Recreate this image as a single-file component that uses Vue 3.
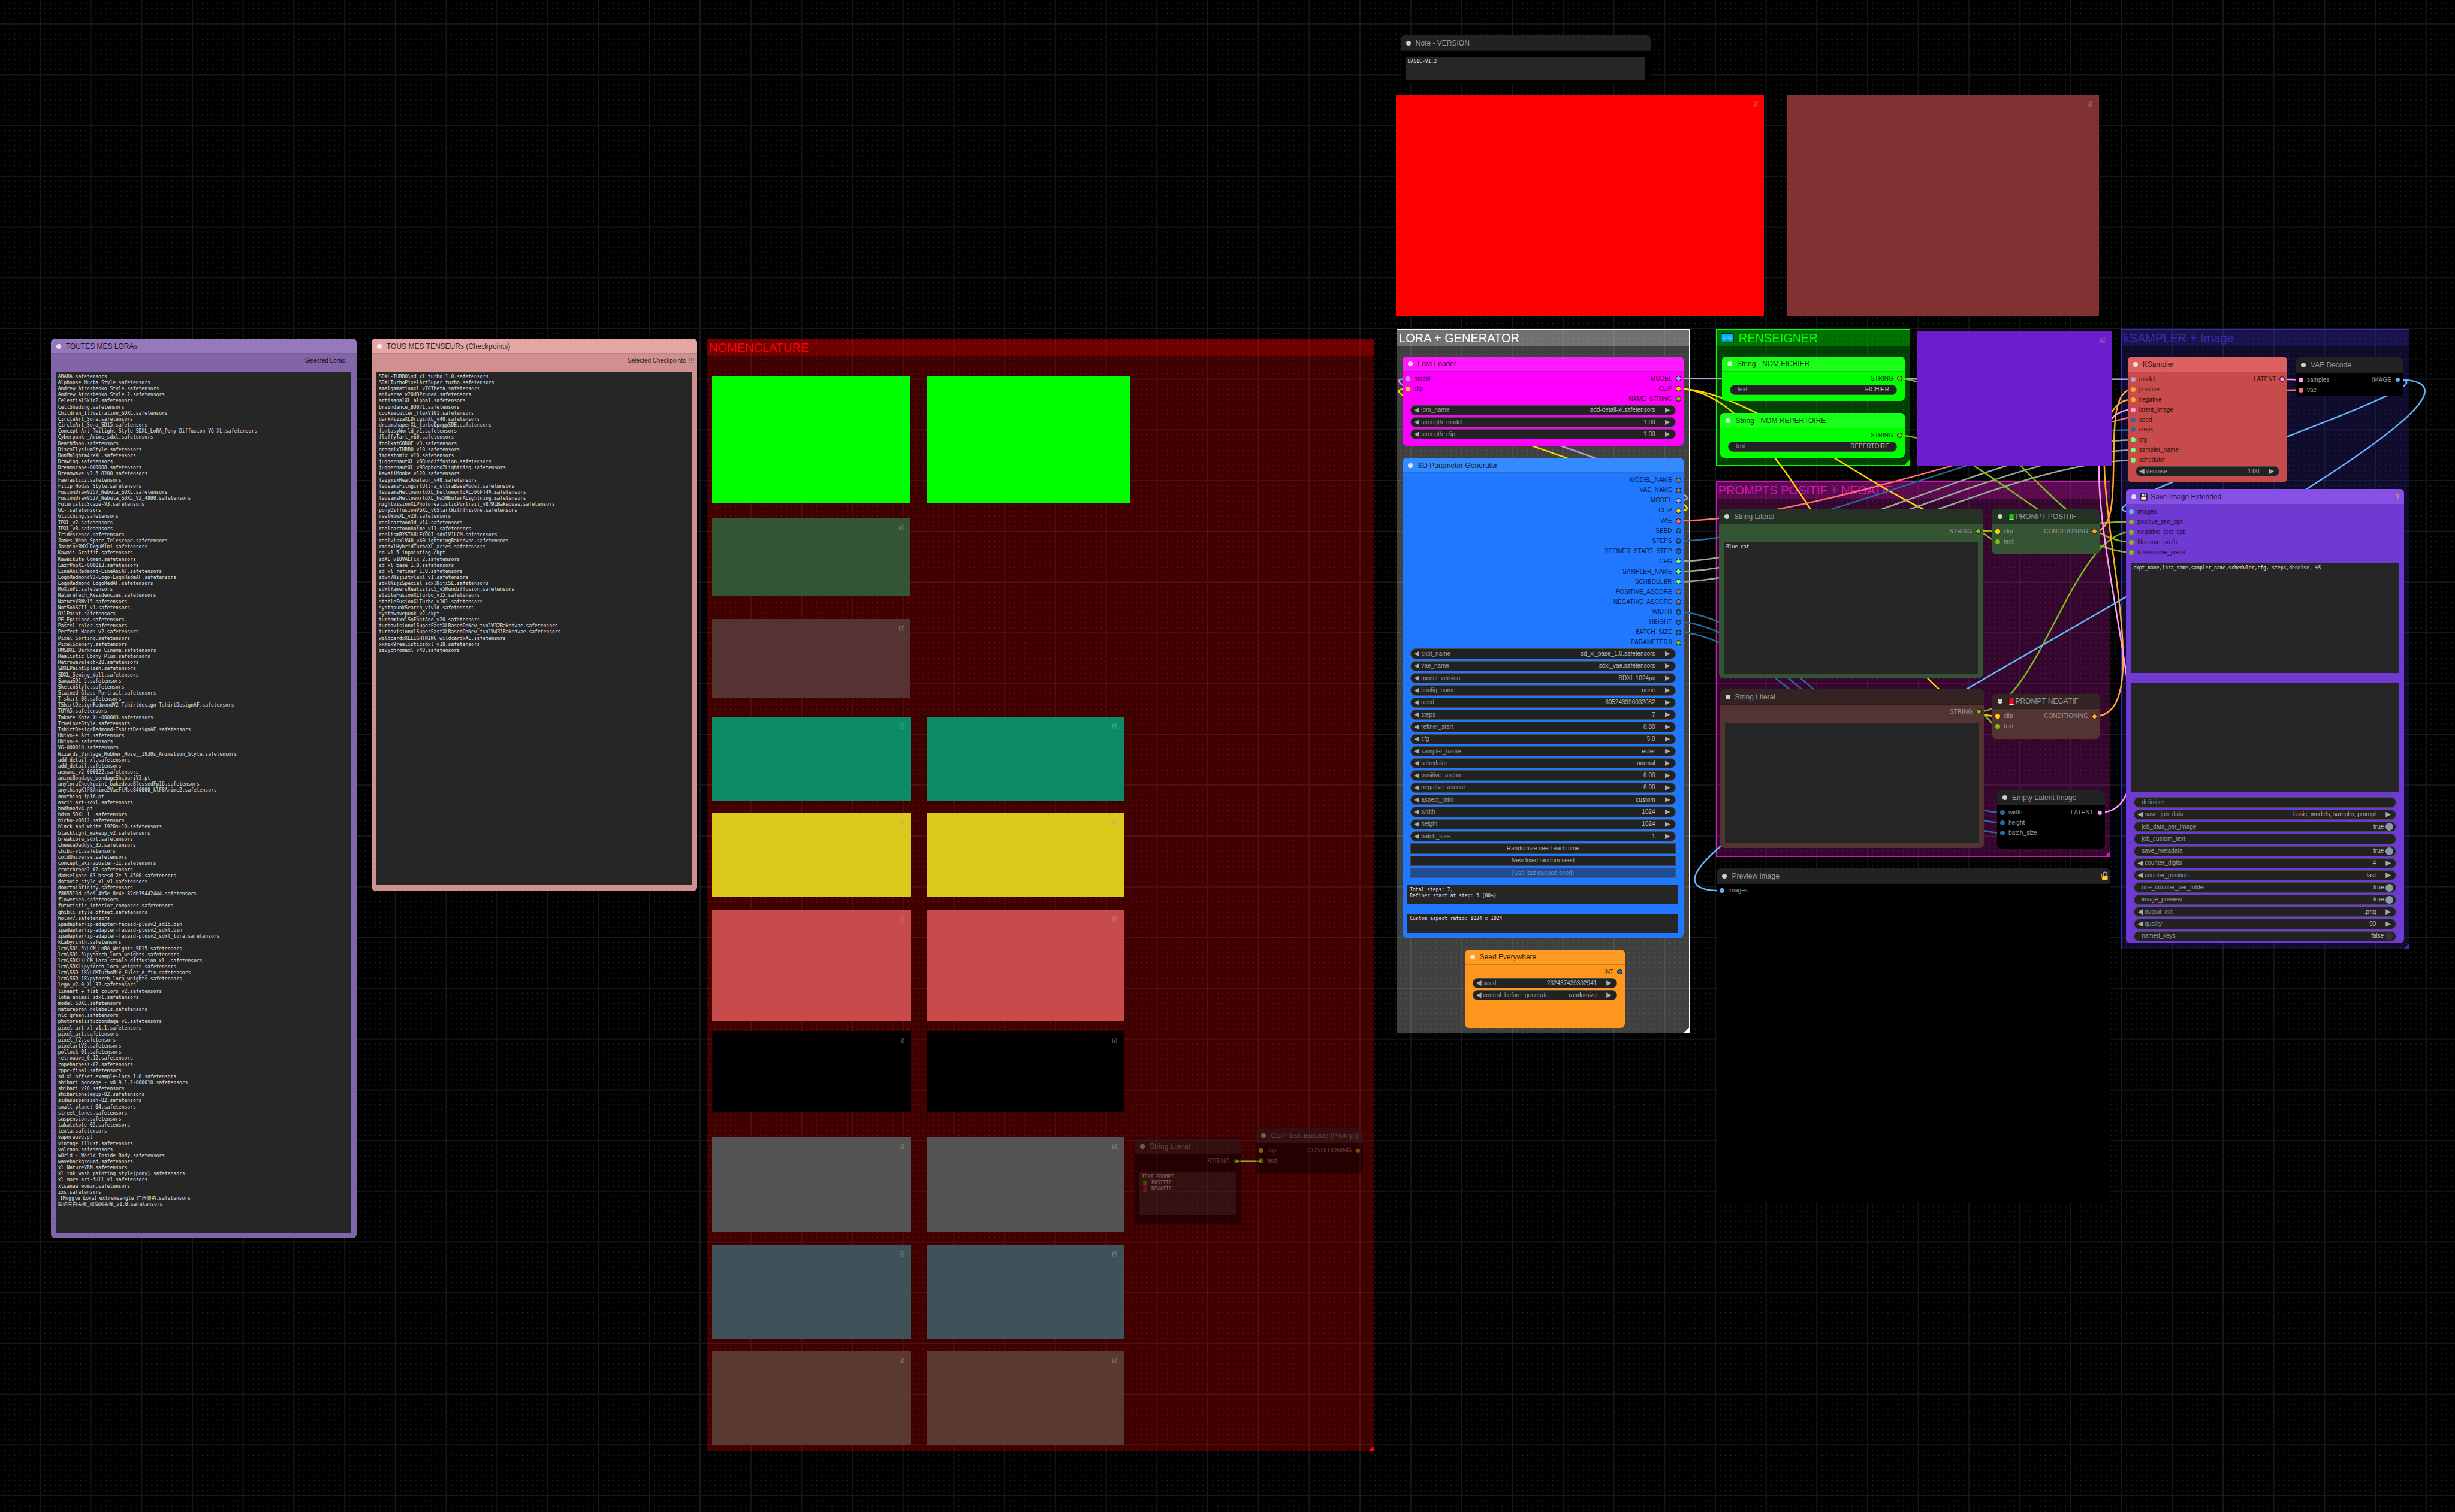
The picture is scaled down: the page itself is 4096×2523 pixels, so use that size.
<script setup>
const W = 4836
const H = 2979

const place = (o) => ({
  left: (o.x / W) * 100 + '%',
  top: (o.y / H) * 100 + '%',
  width: ((o.r - o.x) / W) * 100 + '%',
  height: ((o.b - o.y) / H) * 100 + '%',
})

const files = (text) =>
  text.trim().split('\n').map((s) => (/\.(pt|bin|ckpt)$/.test(s) ? s : s + '.safetensors'))

const loras = files(String.raw`
ABARA
Alphonse Mucha Style
Andrew Atroshenko Style
Andrew Atroshenko Style_2
CelestialSkin2
CellShading
Children_Illustration_SDXL
CircleArt_Sora
CircleArt_Sora_SD15
Concept Art Twilight Style SDXL_LoRA_Pony Diffusion V6 XL
Cyberpunk _Anime_sdxl
DeathMoon
DiscoElysiumStyle
DonMn1ghtm4reXL
Drawing
Dreamscape-000008
Dreamwave v2.5_8200
FaeTastic2
Filip Hodas Style
FusionDraw9257_Nebula_SDXL
FusionDraw9527_Nebula_SDXL_V2_4800
FuturisticScape-V3
GC-
Glitching
IPXL_v2
IPXL_v8
Iridescence
James_Webb_Space_Telescope
JasmineBWXLDoguMini
Kawaii Graffit
Kawaikute Gomen
LazrPopXL-000013
LineAniRedmond-LineAniAF
LogoRedmondV2-Logo-LogoRedmAF
LogoRedmond_LogoRedAF
MoXinV1
NatureTech_Residencies
NatureVRMv15
NotSoASCII_v1
OilPaint
PE_EpicLand
Pastel color
Perfect Hands v2
Pixel Sorting
PixelScenery
RMSDXL_Darkness_Cinema
Realistic_Ebony_Plus
RetrowaveTech-20
SDXLPaintSplash
SDXL_Sewing_doll
SanaaSD1-5
SketchStyle
Stained Glass Portrait
T-shirt-08
TShirtDesignRedmondV2-Tshirtdesign-TshirtDesignAF
TUYA5
Takate_Kote_XL-000003
TrueLoveStyle
TshirtDesignRedmond-TshirtDesignAF
Ukiyo-e Art
Ukiyo-e
VG-000010
Wizards_Vintage_Rubber_Hose__1930s_Animation_Style
add-detail-xl
add_detail
aenami_v2-000022
animeBondage_bondageShibariV3.pt
anyloraCheckpoint_bakedvaeBlessedFp16
anythingKlF8Anime2VaeFtMse840000_klF8Anime2
anything_fp16.pt
ascii_art-sdxl
badhandv4.pt
bdsm_SDXL_1_
bichu-v0612
black_and_white_1920s-10
blacklight_makeup_v2
breakcore_sdxl
cheeseDaddys_35
chibi-v1
coldUniverse
concept_akiraposter-11
crotchrope2-02
damselpose-03-bsesd-2e-5-4500
dataviz_style_xl_v1
doortoinfinity
f865513d-a5e9-4b5e-8e4e-82db39442444
flowersea
futuristic_interior_composer
ghibli_style_offset
holov7
ipadapter\ip-adapter-faceid-plusv2_sd15.bin
ipadapter\ip-adapter-faceid-plusv2_sdxl.bin
ipadapter\ip-adapter-faceid-plusv2_sdxl_lora
kLabyrinth
lcm\SD1.5\LCM_LoRA_Weights_SD15
lcm\SD1.5\pytorch_lora_weights
lcm\SDXL\LCM_lora-stable-diffusion-xl 
lcm\SDXL\pytorch_lora_weights
lcm\SSD-1B\LCMTurboMix_Euler_A_fix
lcm\SSD-1B\pytorch_lora_weights
lego_v2.0_XL_32
lineart + flat colors v2
loha_animal_sdxl
model_SDXL
naturepron_nolabels
nlc_green
photorealisticbondage_v1
pixel-art-xl-v1.1
pixel_art
pixel_f2
pixelartV3
pollock-01
retrowave_0.12
ropeharness-02
rppc-final
sd_xl_offset_example-lora_1.0
shibari_bondage_-_v0.9.1.2-000010
shibari_v20
shibarionelegup-02
sidesuspension-02
small-planet-04
street_tones
suspension
takatekote-02
texta
vaporwave.pt
vintage_illust
volcano
w0rld - World Inside Body
wavebackground
xl_NatureVRM
xl_ink wash painting style(pony)
xl_more_art-full_v1
xlsanaa woman
zxs
【Muggle Lora】extremeangle 广角仰拍
简约黑白头像_极简风头像_v1.0`)

const checkpoints = files(String.raw`
SDXL-TURBO\sd_xl_turbo_1.0
SDXLTurboPixelArtSuper_turbo
amalgamationxl_v70Theta
aniverse_v20HDPruned
artisanalXL_alpha1
braindance_BD071
cookiecutter_flexV101
darkPizzaXLOriginXL_v40
dreamshaperXL_turboDpmppSDE
fantasyWorld_v1
fluffyTart_v60
foolkatGODOF_v3
grogmixTURBO_v10
impastomix_v10
juggernautXL_v8Rundiffusion
juggernautXL_v9Rdphoto2Lightning
kawaiiMonke_v120
lazymixRealAmateur_v40
leosamsFilmgirlUltra_ultraBaseModel
leosamsHelloworldXL_helloworldXL50GPT4V
leosamsHelloworldXL_hw50EulerALightning
nightvisionXLPhotorealisticPortrait_v0791Bakedvae
ponyDiffusionV6XL_v6StartWithThisOne
realWowXL_v20
realcartoon3d_v14
realcartoonAnime_v11
realismBYSTABLEYOGI_sdxlV1LCM
realvisxlV40_v40LightningBakedvae
rmsdxlHybridTurboXL_aries
sd-v1-5-inpainting.ckpt
sdXL_v10VAEFix_2
sd_xl_base_1.0
sd_xl_refiner_1.0
sdvn7Nijistylexl_v1
sdxlNijiSpecial_sdxlNijiSE
sdxlYamersRealistic5_v5Rundiffusion
stableFusionXLTurbo_v15
stableFusionXLTurbo_v161
synthpunkSearch_vivid
synthwavepunk_v2.ckpt
turbomixxlSoFastAnd_v20
turbovisionxlSuperFastXLBasedOnNew_tvxlV32Bakedvae
turbovisionxlSuperFastXLBasedOnNew_tvxlV431Bakedvae
wildcardxXLLIGHTNING_wildcardxXL
xxmix9realisticsdxl_v10
zavychromaxl_v40`)

const groups = [
  { title: 'NOMENCLATURE', cls: 'g-red', x: 1392, y: 667, r: 2707, b: 2860 },
  { title: 'LORA + GENERATOR', cls: 'g-white', x: 2751, y: 648, r: 3328, b: 2036 },
  { title: 'RENSEIGNER', cls: 'g-green', icon: 'keyboard', x: 3380, y: 648, r: 3763, b: 917 },
  { title: 'PROMPTS POSITIF + NEGATIF', cls: 'g-pink', x: 3380, y: 948, r: 4157, b: 1688 },
  { title: 'kSAMPLER + Image', cls: 'g-indigo', x: 4178, y: 648, r: 4746, b: 1870 },
]

const pair = (cls, y, b) => [
  { cls, x: 1403, r: 1795, y, b },
  { cls, x: 1826, r: 2214, y, b },
]
const swatches = [
  { cls: 's-lime', x: 1403, y: 741, r: 1794, b: 992 },
  { cls: 's-lime', x: 1826, y: 741, r: 2225, b: 992 },
  { cls: 's-forest', x: 1403, y: 1021, r: 1794, b: 1175 },
  { cls: 's-brown', x: 1403, y: 1220, r: 1794, b: 1376 },
  ...pair('s-teal', 1412, 1577),
  ...pair('s-yellow', 1601, 1768),
  ...pair('s-coral', 1792, 2012),
  ...pair('s-black', 2032, 2190),
  ...pair('s-gray', 2241, 2427),
  ...pair('s-slate', 2452, 2638),
  ...pair('s-rust', 2662, 2848),
  { cls: 's-red', x: 2750, y: 186, r: 3475, b: 623 },
  { cls: 's-maroon', x: 3519, y: 186, r: 4135, b: 622 },
  { cls: 's-violet', x: 3777, y: 653, r: 4160, b: 917 },
]

const C = {
  model: '#b39ddb', clip: '#ffd500', vae: '#ff6e6e', str: '#7cbb1a', int: '#29699c',
  any: '#777788', on: '#77ff77', link: '#99aa99', cond: '#ffa931', latent: '#ff9cf9', image: '#64b5f6',
}

const combo = (name, value) => ({ k: 'combo', name, value })
const num = (name, value) => ({ k: 'num', name, value })
const text = (name, value) => ({ k: 'text', name, value })
const toggle = (name, on) => ({ k: 'toggle', name, on })
const button = (name, off) => ({ k: 'button', name, off })

const gap = (h) => ({ k: 'gap', h })
const widgets = (list) => ({ k: 'widgets', list, h: list.length * 24 - 4 })
const area = (h, value = '') => ({ k: 'area', h, value })
const slots = (ins, outs) => ({ k: 'slots', ins, outs, h: Math.max(ins.length, outs.length) * 20 })

const nodes = [
  { title: 'TOUTES MES LORAs', cls: 'n-lilac', x: 100, y: 667, r: 702, b: 2440,
    rows: [slots([], [['Selected Loras', 'grid']]), gap(16), { k: 'list', h: 1696, lines: loras }, gap(11)] },
  { title: 'TOUS MES TENSEURs (Checkpoints)', cls: 'n-rose', x: 732, y: 667, r: 1373, b: 1756,
    rows: [slots([], [['Selected Checkpoints', 'grid']]), gap(16), { k: 'list', h: 1011, lines: checkpoints }, gap(12)] },
  { title: 'Note - VERSION', cls: 'n-black', x: 2759, y: 70, r: 3252, b: 168,
    rows: [gap(12), area(46, 'BASIC-V1.2'), gap(10)] },
  { title: 'Lora Loader', cls: 'n-magenta', x: 2763, y: 702, r: 3316, b: 878,
    rows: [
      slots([['model', C.model], ['clip', C.clip]], [['MODEL', C.model], ['CLIP', C.clip], ['NAME_STRING', C.str]]),
      gap(6),
      widgets([combo('lora_name', 'add-detail-xl.safetensors'), num('strength_model', '1.00'), num('strength_clip', '1.00')]),
      gap(12),
    ] },
  { title: 'SD Parameter Generator', cls: 'n-blue', x: 2763, y: 902, r: 3316, b: 1848,
    rows: [
      slots([], [
        ['MODEL_NAME', C.any], ['VAE_NAME', C.any], ['MODEL', C.model], ['CLIP', C.clip], ['VAE', C.vae],
        ['SEED', C.int], ['STEPS', C.int], ['REFINER_START_STEP', C.int], ['CFG', C.on], ['SAMPLER_NAME', C.on],
        ['SCHEDULER', C.on], ['POSITIVE_ASCORE', C.any], ['NEGATIVE_ASCORE', C.any], ['WIDTH', C.int],
        ['HEIGHT', C.int], ['BATCH_SIZE', C.int], ['PARAMETERS', C.str],
      ]),
      gap(6),
      widgets([
        combo('ckpt_name', 'sd_xl_base_1.0.safetensors'), combo('vae_name', 'sdxl_vae.safetensors'),
        combo('model_version', 'SDXL 1024px'), combo('config_name', 'none'), num('seed', '605243996032082'),
        num('steps', '7'), num('refiner_start', '0.80'), num('cfg', '5.0'), combo('sampler_name', 'euler'),
        combo('scheduler', 'normal'), num('positive_ascore', '6.00'), num('negative_ascore', '6.00'),
        combo('aspect_ratio', 'custom'), num('width', '1024'), num('height', '1024'), num('batch_size', '1'),
        button('Randomize seed each time'), button('New fixed random seed'), button('(Use last queued seed)', true),
      ]),
      gap(14), area(37, 'Total steps: 7,\nRefiner start at step: 5 (80%)'), gap(20),
      area(37, 'Custom aspect ratio: 1024 x 1024'), gap(10),
    ] },
  { title: 'Seed Everywhere', cls: 'n-orange', x: 2885, y: 1871, r: 3201, b: 2025,
    rows: [slots([], [['INT', C.int]]), gap(6), widgets([num('seed', '232437439302941'), combo('control_before_generate', 'randomize')]), gap(54)] },
  { title: 'String - NOM FICHIER', cls: 'n-lime', x: 3392, y: 702, r: 3752, b: 790,
    rows: [slots([], [['STRING', C.str]]), gap(6), widgets([text('text', 'FICHIER')]), gap(12)] },
  { title: 'String - NOM REPERTOIRE', cls: 'n-lime', x: 3389, y: 814, r: 3752, b: 902,
    rows: [slots([], [['STRING', C.str]]), gap(6), widgets([text('text', 'REPERTOIRE')]), gap(12)] },
  { title: 'String Literal', cls: 'n-forest', x: 3386, y: 1003, r: 3907, b: 1336,
    rows: [slots([], [['STRING', C.str]]), gap(16), area(258, 'Blue cat'), gap(9)] },
  { title: 'PROMPT POSITIF', icon: 'book-green', cls: 'n-forest', x: 3925, y: 1003, r: 4136, b: 1092,
    rows: [slots([['clip', C.clip], ['text', C.str]], [['CONDITIONING', C.cond]]), gap(19)] },
  { title: 'String Literal', cls: 'n-brown', x: 3388, y: 1358, r: 3908, b: 1671,
    rows: [slots([], [['STRING', C.str]]), gap(16), area(236), gap(11)] },
  { title: 'PROMPT NEGATIF', icon: 'book-red', cls: 'n-brown', x: 3925, y: 1367, r: 4136, b: 1456,
    rows: [slots([['clip', C.clip], ['text', C.str]], [['CONDITIONING', C.cond]]), gap(19)] },
  { title: 'Empty Latent Image', cls: 'n-black', x: 3934, y: 1557, r: 4146, b: 1672,
    rows: [slots([['width', C.int], ['height', C.int], ['batch_size', C.int]], [['LATENT', C.latent]]), gap(25)] },
  { title: 'Preview Image', cls: 'n-black', end: 'lock', x: 3382, y: 1711, r: 4157, b: 2369,
    rows: [slots([['images', C.image]], []), gap(608)] },
  { title: 'KSampler', cls: 'n-coral', x: 4191, y: 703, r: 4506, b: 951,
    rows: [
      slots([
        ['model', C.model], ['positive', C.cond], ['negative', C.cond], ['latent_image', C.latent], ['seed', C.int],
        ['steps', C.int], ['cfg', C.on], ['sampler_name', C.on], ['scheduler', C.on],
      ], [['LATENT', C.latent]]),
      gap(6), widgets([num('denoise', '1.00')]), gap(12),
    ] },
  { title: 'VAE Decode', cls: 'n-black', x: 4522, y: 704, r: 4733, b: 780,
    rows: [slots([['samples', C.latent], ['vae', C.vae]], [['IMAGE', C.image]]), gap(6)] },
  { title: 'Save Image Extended', icon: 'floppy', end: 'help', cls: 'n-violet', x: 4188, y: 964, r: 4736, b: 1859,
    rows: [
      slots([
        ['images', C.image], ['positive_text_opt', C.str], ['negative_text_opt', C.str],
        ['filename_prefix', C.str], ['foldername_prefix', C.str],
      ], []),
      gap(16), area(215, 'ckpt_name,lora_name,sampler_name,scheduler,cfg, steps,denoise, %S'), gap(20), area(215), gap(10),
      widgets([
        text('delimiter', '_'), combo('save_job_data', 'basic, models, sampler, prompt'), toggle('job_data_per_image', true),
        text('job_custom_text', ''), toggle('save_metadata', true), num('counter_digits', '4'), combo('counter_position', 'last'),
        toggle('one_counter_per_folder', true), toggle('image_preview', true), combo('output_ext', '.png'),
        num('quality', '90'), toggle('named_keys', false),
      ]),
      gap(4),
    ] },
  { title: 'String Literal', cls: 'n-black ghost', x: 2235, y: 2244, r: 2445, b: 2411,
    rows: [slots([], [['STRING', C.str]]), gap(16), { k: 'legend', h: 85 }, gap(16)] },
  { title: 'CLIP Text Encode (Prompt)', cls: 'n-black ghost', x: 2474, y: 2223, r: 2685, b: 2312,
    rows: [slots([['clip', C.clip], ['text', C.str]], [['CONDITIONING', C.cond]]), gap(19)] },
]

const links = [
  [3306, 986, 2773, 746, C.model], [3306, 1006, 2773, 766, C.clip],
  [3306, 746, 4201, 747, C.model], [3306, 766, 3935, 1047, C.clip], [3306, 766, 3935, 1411, C.clip],
  [3306, 1026, 4532, 768, C.vae], [3306, 1066, 4201, 847, C.int],
  [3306, 1106, 4201, 867, C.link], [3306, 1126, 4201, 887, C.link], [3306, 1146, 4201, 907, C.link],
  [3306, 1206, 3944, 1601, C.int], [3306, 1226, 3944, 1621, C.int], [3306, 1246, 3944, 1641, C.int],
  [3742, 746, 4198, 1068, C.str], [3742, 858, 4198, 1088, C.str],
  [3897, 1047, 3935, 1067, C.str], [3897, 1047, 4198, 1028, C.str],
  [3898, 1402, 3935, 1431, C.str], [3898, 1402, 4198, 1048, C.str],
  [4126, 1047, 4201, 767, C.cond], [4126, 1411, 4201, 787, C.cond],
  [4136, 1601, 4201, 807, C.latent], [4496, 747, 4532, 748, C.latent],
  [4723, 748, 4198, 1008, C.image], [4723, 748, 3392, 1755, C.image],
  [2435, 2288, 2484, 2288, C.str],
].map(([x1, y1, x2, y2, color]) => {
  const d = Math.hypot(x2 - x1, y2 - y1) / 4
  return { color, d: `M${x1} ${y1}C${x1 + d} ${y1} ${x2 - d} ${y2} ${x2} ${y2}` }
})

const steps = [10, 20, 30, 40, 50, 60, 70, 80, 90]
const marks = steps.flatMap((y) => steps.map((x) => `M${x - 1.5} ${y}h3M${x} ${y - 1.5}v3`)).join('')
</script>

<template>
  <main class="canvas">
    <svg class="layer" :viewBox="`0 0 ${W} ${H}`" preserveAspectRatio="none" aria-hidden="true">
      <defs>
        <pattern id="grid" x="79" y="47" width="100" height="100" patternUnits="userSpaceOnUse">
          <path d="M0 0H100M0 0V100M100 0V100M0 100H100" stroke="#15191c" stroke-width="2.4" fill="none" />
          <path :d="marks" stroke="#212325" stroke-width="1" fill="none" />
        </pattern>
        <symbol id="i-book-green" viewBox="0 0 10 14">
          <rect width="10" height="14" rx="1" fill="#062c06" /><rect x="1" y="1" width="8" height="10" fill="#17c40f" />
          <rect x="1" y="11" width="8" height="2" fill="#e8f5e8" />
        </symbol>
        <symbol id="i-book-red" viewBox="0 0 10 14">
          <rect width="10" height="14" rx="1" fill="#3a0509" /><rect x="1" y="1" width="8" height="10" fill="#e81123" />
          <rect x="1" y="11" width="8" height="2" fill="#f5e8e8" />
        </symbol>
        <symbol id="i-keyboard" viewBox="0 0 26 18">
          <rect width="26" height="18" rx="1" fill="#03232e" /><rect x="1.5" y="1.5" width="23" height="15" fill="#00b2f0" />
          <path d="M3 5.5h20M3 8h20M3 10.500h20" stroke="#7fdcff" stroke-width="1.300" stroke-dasharray="1.500 .7" />
          <rect x="10" y="13" width="6" height="3.500" fill="#0583b5" />
        </symbol>
        <symbol id="i-floppy" viewBox="0 0 16 16">
          <path d="M1 1h14v14H2l-1-1z" fill="#2b2b2b" stroke="#1a1a1a" /><rect x="4" y="1.500" width="8" height="5" fill="#d9d9d9" />
          <rect x="9" y="2" width="2" height="4" fill="#444" /><rect x="3" y="8" width="10" height="6" fill="#f5f5f5" />
          <rect x="3" y="13" width="10" height="1.500" fill="#d13438" />
        </symbol>
        <symbol id="i-lock" viewBox="0 0 14 16">
          <path d="M5.500 8V4.500a3 3 0 0 1 6.500 0V8" fill="none" stroke="#aaa" stroke-width="1.500" />
          <rect x="3.500" y="8" width="10" height="7.500" rx="1" fill="#ffc83d" />
          <path d="M1 5h2.500v2.500H2.500v2H4v2H1.500v-2.500H1z" fill="#f29a00" />
        </symbol>
        <symbol id="i-edit" viewBox="0 0 10 10">
          <path d="M5 2H2.500a1 1 0 0 0-1 1v5a1 1 0 0 0 1 1H7a1 1 0 0 0 1-1V5.500M4 6.700l.4-1.600L8 .8l1.200 1.100-3.700 4.200z" fill="none" stroke="#a9a9a9" stroke-width=".9" />
        </symbol>
      </defs>
      <rect :width="W" :height="H" fill="url(#grid)" />
    </svg>

    <section v-for="g in groups" :key="g.title" class="group" :class="g.cls" :style="place(g)">
      <h2><svg v-if="g.icon" class="g-icon" aria-hidden="true"><use :href="`#i-${g.icon}`" /></svg>{{ g.title }}</h2>
      <i class="corner"></i>
    </section>

    <svg class="layer" :viewBox="`0 0 ${W} ${H}`" preserveAspectRatio="none" aria-hidden="true">
      <path v-for="l in links" :key="l.d" :d="l.d" :stroke="l.color" stroke-width="3" fill="none" />
    </svg>

    <div v-for="(s, i) in swatches" :key="i" class="swatch" :class="s.cls" :style="place(s)">
      <button class="edit" aria-label="Edit note"><svg><use href="#i-edit" /></svg></button>
    </div>

    <article v-for="(n, i) in nodes" :key="i" class="node" :class="n.cls" :style="place(n)">
      <header>
        <button class="dot" aria-label="Collapse"></button>
        <h3><svg v-if="n.icon" :class="n.icon" aria-hidden="true"><use :href="`#i-${n.icon}`" /></svg>{{ n.title }}</h3>
        <svg v-if="n.end === 'lock'" class="lock" aria-hidden="true"><use href="#i-lock" /></svg>
        <button v-if="n.end === 'help'" class="help">?</button>
      </header>
      <template v-for="(row, j) in n.rows" :key="j">
        <div v-if="row.k === 'gap'" :style="{ flexGrow: row.h }"></div>

        <div v-else-if="row.k === 'slots'" class="slots" :style="{ flexGrow: row.h }">
          <ul>
            <li v-for="s in row.ins" :key="s[0]"><i class="pin" :style="{ background: s[1] }"></i>{{ s[0] }}</li>
            <li v-for="k in row.h / 20 - row.ins.length" :key="k" aria-hidden="true"></li>
          </ul>
          <ul class="outs">
            <li v-for="s in row.outs" :key="s[0]">
              {{ s[0] }}<i v-if="s[1] === 'grid'" class="pin-grid"></i><i v-else class="pin" :style="{ background: s[1] }"></i>
            </li>
            <li v-for="k in row.h / 20 - row.outs.length" :key="k" aria-hidden="true"></li>
          </ul>
        </div>

        <div v-else-if="row.k === 'widgets'" class="widgets" :style="{ flexGrow: row.h }">
          <template v-for="w in row.list" :key="w.name">
            <button v-if="w.k === 'button'" class="wide" :class="{ off: w.off }">{{ w.name }}</button>
            <div v-else class="pill" :class="w.k">
              <button v-if="w.k === 'combo' || w.k === 'num'" class="arrow left" aria-label="Previous"></button>
              <label :for="`w${i}-${w.name}`">{{ w.name }}</label>
              <select v-if="w.k === 'combo'" :id="`w${i}-${w.name}`"><option>{{ w.value }}</option></select>
              <template v-else-if="w.k === 'toggle'">
                <span class="state">{{ w.on ? 'true' : 'false' }}</span>
                <input :id="`w${i}-${w.name}`" type="checkbox" :checked="w.on" />
              </template>
              <input v-else :id="`w${i}-${w.name}`" type="text" :value="w.value" />
              <button v-if="w.k === 'combo' || w.k === 'num'" class="arrow right" aria-label="Next"></button>
            </div>
          </template>
        </div>

        <div v-else class="box" :style="{ flexGrow: row.h }">
          <textarea v-if="row.k === 'area'" class="area" :value="row.value" :aria-label="n.title"></textarea>

          <div v-else-if="row.k === 'list'" class="area list">
            <ol :style="{ height: ((row.lines.length * 12) / row.h) * 100 + '%' }">
              <li v-for="line in row.lines" :key="line">{{ line }}</li>
            </ol>
          </div>

          <div v-else class="area legend">
            <p>TEXT PROMPT</p>
            <p><svg aria-hidden="true"><use href="#i-book-green" /></svg>POSITIF</p>
            <p><svg aria-hidden="true"><use href="#i-book-red" /></svg>NEGATIF</p>
          </div>
        </div>
      </template>
    </article>
  </main>
</template>

<style>
body { margin: 0; background: #000; }
</style>

<style scoped>
* { box-sizing: border-box; margin: 0; padding: 0; }
button, input, select, textarea { font: inherit; color: inherit; border: 0; background: none; outline: 0; appearance: none; border-radius: 0; }
ul, ol { list-style: none; }
.canvas { position: relative; width: 100%; height: 100vh; overflow: hidden; background: #000; font: 10px/12px "Liberation Sans", Arial, sans-serif; }
.layer { position: absolute; inset: 0; width: 100%; height: 100%; }

.group { position: absolute; border: 1px solid var(--c); background: color-mix(in srgb, var(--c) 25%, transparent); color: var(--c); }
.group h2 { display: flex; align-items: center; height: 28px; padding: 0 3px; background: color-mix(in srgb, var(--c) 25%, transparent); font-size: 20px; line-height: 28px; font-weight: 400; white-space: nowrap; }
.g-icon { width: 22px; height: 15px; margin: 0 8px 0 4px; }
.corner { position: absolute; right: 0; bottom: 0; width: 8px; height: 8px; background: linear-gradient(135deg, transparent 50%, var(--c) 50%); }
.g-red { --c: #ff0000; }
.g-white { --c: #ffffff; }
.g-green { --c: #00ff00; }
.g-pink { --c: #d417b8; }
.g-indigo { --c: #382cb0; }

.swatch { position: absolute; }
.edit { position: absolute; top: 10px; right: 10px; width: 10px; height: 10px; opacity: .6; }
.edit svg { display: block; width: 10px; height: 10px; }
.s-lime { background: #00ff00; }
.s-lime .edit { opacity: .2; }
.s-forest { background: #335533; }
.s-brown { background: #553333; }
.s-teal { background: #0b8c66; }
.s-yellow { background: #dcc91e; }
.s-coral { background: #c84b4b; }
.s-black { background: #000; }
.s-gray { background: #535353; }
.s-slate { background: #3f5159; }
.s-rust { background: #593930; }
.s-red { background: #ff0000; }
.s-maroon { background: #803232; }
.s-violet { background: #6c1ecf; }

.node { position: absolute; display: flex; flex-direction: column; background: var(--b); color: var(--t); border-radius: 7px; overflow: hidden; }
.node > * { flex: 0 1 0; min-height: 0; }
.node > header { flex-grow: 30; display: flex; align-items: center; padding: 0 8px 0 9px; background: var(--h); box-shadow: inset 0 -1px rgba(0, 0, 0, .2); }
.node h3 { flex: 1; display: flex; align-items: center; margin-left: 8px; font-size: 12px; line-height: 14px; font-weight: 400; white-space: nowrap; }
.dot { width: 8px; height: 8px; border-radius: 50%; background: rgba(255, 255, 255, .78); }
.book-green, .book-red { width: 10px; height: 13px; margin: 0 1px 0 2px; }
.floppy { width: 13px; height: 13px; margin-right: 5px; margin-left: -2px; }
.lock { width: 13px; height: 15px; margin-right: -4px; }
.help { color: #ffa500; font-weight: 700; }
.n-lilac { --h: #9678bd; --b: #8264a8; --t: rgba(0, 0, 0, .85); }
.n-rose { --h: #e6a5a5; --b: #d19090; --t: rgba(0, 0, 0, .8); }
.n-magenta { --h: #ff19ff; --b: #ff00ff; --t: rgba(0, 0, 0, .8); }
.n-blue { --h: #348bff; --b: #1f78ff; --t: rgba(0, 0, 0, .8); }
.n-orange { --h: #ff9a22; --b: #ff961e; --t: rgba(0, 0, 0, .8); }
.n-lime { --h: #19ff19; --b: #00ff00; --t: rgba(0, 0, 0, .8); }
.n-coral { --h: #dd6060; --b: #c84b4b; --t: rgba(0, 0, 0, .8); }
.n-violet { --h: #8650e8; --b: #6f3ad2; --t: rgba(0, 0, 0, .8); }
.n-forest { --h: #233223; --b: #345433; --t: #999; }
.n-brown { --h: #332323; --b: #543333; --t: #999; }
.n-black { --h: #222; --b: #000; --t: #999; }
.ghost { opacity: .42; }

.slots { display: flex; justify-content: space-between; padding: 0 4px 0 5px; }
.slots ul { display: flex; flex-direction: column; }
.slots li { flex: 1 1 0; min-height: 0; display: flex; align-items: center; padding-top: 7px; gap: 6px; white-space: nowrap; }
.outs li { justify-content: flex-end; }
.pin { width: 8px; height: 8px; border-radius: 50%; }
.outs .pin { width: 9px; height: 9px; border: 1px solid #000; }
.pin-grid { width: 9px; height: 9px; background: repeating-linear-gradient(90deg, transparent 0 2px, var(--b) 2px 3px), repeating-linear-gradient(#778 0 2px, var(--b) 2px 3px); }

.widgets { display: flex; flex-direction: column; gap: 3px; padding: 0 13px; }
.widgets > * { flex: 1 1 0; min-height: 0; }
.pill { display: flex; align-items: center; padding: 0 8px 0 5px; border: 1px solid #4a4a4a; border-radius: 9px; background: #222; color: #bbb; }
.pill label { color: #999; white-space: nowrap; }
.pill input[type="text"], .pill select { flex: 1; width: 0; min-width: 0; height: 12px; line-height: 12px; text-align: right; text-align-last: right; }
.pill.text, .pill.toggle { padding: 0 12px; }
.pill.toggle { justify-content: space-between; padding-right: 4px; }
.state { margin-left: auto; }
.pill input[type="checkbox"] { width: 13px; height: 13px; margin-left: 3px; border-radius: 50%; background: #333; }
.pill input[type="checkbox"]:checked { background: #8899aa; }
.arrow { width: 9px; height: 9px; background: #aaa; }
.left { margin-right: 3px; clip-path: polygon(100% 0, 0 50%, 100% 100%); }
.right { margin-left: 16px; clip-path: polygon(0 0, 100% 50%, 0 100%); }
.wide { border: 1px solid #444; background: #222; color: #aaa; text-align: center; }
.wide.off { opacity: .5; }

.box { display: flex; padding: 0 9px 0 8px; }
.area { flex: 1; min-width: 0; padding: 3px 4px; background: #262626; color: #e4e4e4; font: 8px/10px "DejaVu Sans Mono", "Noto Sans CJK SC", monospace; white-space: pre; overflow: hidden; resize: none; }
.area.list { padding-block: 0; }
.area ol { display: flex; flex-direction: column; margin-top: 3px; }
.area li { flex: 1 1 0; min-height: 0; display: flex; align-items: center; }
.legend p { display: flex; align-items: center; height: 10px; }
.legend svg { width: 8px; height: 10px; margin: 0 7px 0 1px; }
</style>
